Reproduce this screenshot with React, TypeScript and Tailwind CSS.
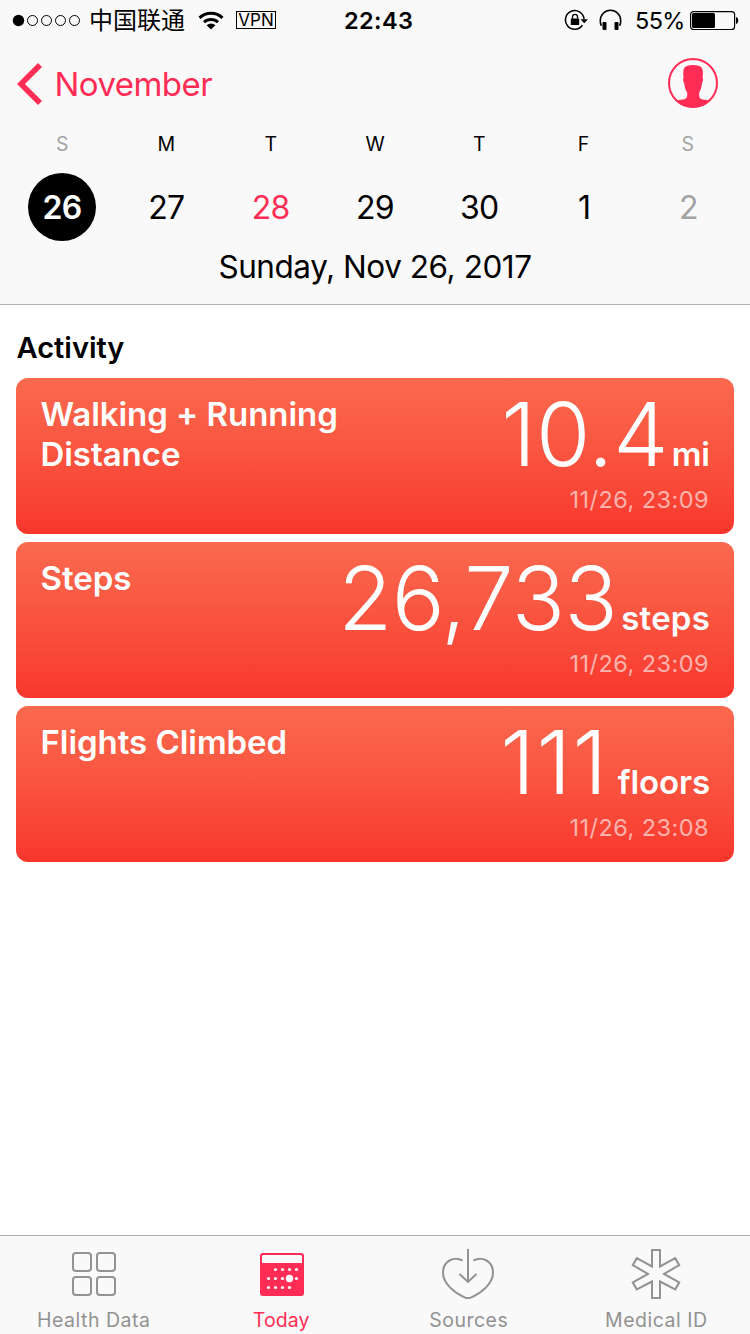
import React from 'react';
import clsx from 'clsx';

interface Day {
  letter: string;
  date: string;
  tone: 'selected' | 'normal' | 'today' | 'muted';
}

interface Metric {
  title: string;
  value: string;
  unit: string;
  time: string;
  valueClass: string;
  unitClass: string;
}

const days: Day[] = [
  { letter: 'S', date: '26', tone: 'selected' },
  { letter: 'M', date: '27', tone: 'normal' },
  { letter: 'T', date: '28', tone: 'today' },
  { letter: 'W', date: '29', tone: 'normal' },
  { letter: 'T', date: '30', tone: 'normal' },
  { letter: 'F', date: '1', tone: 'normal' },
  { letter: 'S', date: '2', tone: 'muted' },
];

const metrics: Metric[] = [
  {
    title: 'Walking + Running Distance',
    value: '10.4',
    unit: 'mi',
    time: '11/26, 23:09',
    valueClass: 'tracking-[0.1px]',
    unitClass: 'ml-[3px]',
  },
  {
    title: 'Steps',
    value: '26,733',
    unit: 'steps',
    time: '11/26, 23:09',
    valueClass: 'tracking-[-0.5px]',
    unitClass: 'ml-[4px] tracking-[0.2px]',
  },
  {
    title: 'Flights Climbed',
    value: '111',
    unit: 'floors',
    time: '11/26, 23:08',
    valueClass: 'tracking-[1.500px]',
    unitClass: 'ml-[9px] tracking-[-0.1px]',
  },
];

const StatusBar: React.FC = () => (
  <div className="flex h-[40px] items-center pr-[11px] pl-[12px] text-[23.5px] leading-[40px] text-black">
    <svg width="70" height="14" viewBox="0 0 70 14" className="shrink-0">
      <circle cx="6.5" cy="7.5" r="5.7" />
      {[20.5, 34.5, 48.5, 62.5].map((cx) => (
        <circle key={cx} cx={cx} cy="7.5" r="5" fill="none" stroke="black" />
      ))}
    </svg>
    <span className="ml-[7px] w-[98px] shrink-0 pt-[2px] text-[24px] leading-[38px] whitespace-nowrap">中国联通</span>
    <svg width="26" height="19" viewBox="0 0 26 19" className="ml-[11px] shrink-0">
      <g fill="none" stroke="black" strokeWidth="3">
        <path d="M1.5 6.8a16.5 16.5 0 0 1 23 0" />
        <path d="M6 11.2a10.2 10.2 0 0 1 14 0" />
      </g>
      <path d="M13 18.5l-4.4-4.2a6.6 6.6 0 0 1 8.8 0z" />
    </svg>
    <span className="ml-[12px] flex h-[18px] w-[40px] shrink-0 items-center justify-center border border-black pt-px text-[17px] leading-none">
      VPN
    </span>
    <span className="ml-[68px] w-[72px] shrink-0 pt-[2px] text-[23.5px] leading-[38px] font-semibold tracking-[0.4px]">22:43</span>
    <div className="ml-auto flex items-center">
      <svg width="25" height="22" viewBox="0 0 25 22">
        <path d="M18.4 16.2A9.3 9.3 0 1 1 20 10" fill="none" stroke="black" strokeWidth="1.5" />
        <path d="M16.5 10.3h7.5l-3.8 4z" />
        <rect x="6.8" y="9.5" width="8.4" height="6.5" rx="0.6" />
        <path d="M8.5 9.8V7.8a2.500 2.500 0 0 1 5 0v2" fill="none" stroke="black" strokeWidth="1.3" />
      </svg>
      <svg width="24" height="22" viewBox="0 0 24 22" className="ml-[10px]">
        <path d="M2.4 16.8C1.200 15 1.300 13 1.300 11.500a10.200 10.200 0 0 1 20.400 0c0 1.500.1 3.500-1.100 5.300" fill="none" stroke="black" strokeWidth="1.6" />
        <rect x="3.5" y="13" width="4" height="8" rx="1" />
        <rect x="15.5" y="13" width="4" height="8" rx="1" />
      </svg>
      <span className="ml-[12px] w-[55px] pt-[2px] leading-[38px] tracking-[-0.6px]">55%</span>
      <svg width="49" height="20" viewBox="0 0 49 20">
        <rect x="0.6" y="1.6" width="44" height="18" rx="3" fill="none" stroke="black" strokeWidth="1.2" />
        <rect x="2" y="3" width="23" height="15" rx="1.5" />
        <path d="M46 7c3 .5 3 6.500 0 7z" />
      </svg>
    </div>
  </div>
);

const ProfileIcon: React.FC = () => (
  <svg width="50" height="50" viewBox="0 0 50 50" className="mb-[2px]">
    <circle cx="25" cy="25" r="24" fill="none" stroke="#ff2d55" strokeWidth="2" />
    <path
      fill="#ff2d55"
      d="M25 7C29.500 7 32.500 8 33.800 9.800C35.400 12 35 16 34.600 20.300C35.500 20.500 35.200 23.500 34 25C33.600 29.500 32.700 32 31.200 34.500V37.500C31.200 40 32 40.700 34 41.200C36.500 41.900 39 41.600 41.500 42.800C37.500 47.500 31.500 49.500 25 49.500S12.500 47.500 8.500 42.800C11 41.600 13.500 41.900 16 41.200C18 40.700 19.200 40 19.200 37.500V34.500C17.500 32 16.600 29.500 16.200 25C15 23.500 14.700 20.500 15.600 20.300C15.200 16 14.800 12 16.400 9.800C17.800 8 20.500 7 25 7Z"
    />
  </svg>
);

const HealthDataIcon: React.FC = () => (
  <svg width="52" height="52" viewBox="0 0 52 52" fill="none" stroke="currentColor" strokeWidth="2">
    <rect x="5" y="5" width="18" height="18" rx="3" />
    <rect x="29" y="5" width="18" height="18" rx="3" />
    <rect x="5" y="29" width="18" height="18" rx="3" />
    <rect x="29" y="29" width="18" height="18" rx="3" />
  </svg>
);

const TodayIcon: React.FC = () => (
  <svg width="54" height="52" viewBox="0 0 54 52">
    <g transform="translate(2 0)">
      <rect x="4" y="5" width="44" height="43" rx="3" fill="currentColor" />
      <path d="M6 8.5Q6 7 7.500 7h37Q46 7 46 8.500V15H6z" fill="#fafafa" />
      <g fill="white">
        {[19.5, 26.5, 33.5, 40.5].map((x) => <circle key={x} cx={x} cy="21.5" r="1.6" />)}
        {[12.5, 19.5, 26.5, 40.5].map((x) => <circle key={x} cx={x} cy="30.5" r="1.6" />)}
        {[12.5, 19.5, 26.5, 33.5].map((x) => <circle key={x} cx={x} cy="39.5" r="1.6" />)}
        <circle cx="33.5" cy="30.5" r="3.7" />
      </g>
    </g>
  </svg>
);

const SourcesIcon: React.FC = () => (
  <svg width="56" height="52" viewBox="0 0 56 52" fill="none" stroke="currentColor" strokeWidth="2">
    <path d="M21.7 12.7C14 8.3 2 12 2 24.5C2 36 14 45 23.5 49.3Q27 50.8 30.5 49.3C40 45 52 36 52 24.5C52 12 40 8.3 32.3 12.7" />
    <path d="M27 1v33M18.5 26l8.5 8 8.5-8" />
  </svg>
);

const MedicalIcon: React.FC = () => (
  <svg width="52" height="52" viewBox="0 0 52 52" fill="none" stroke="currentColor" strokeWidth="2">
    <path d="M22 2h8v16.5l15.2-8.3 4 7L34 26l15.2 8.3-4 7L30 33.5V50h-8V33.5L6.8 41.3l-4-7L18 26 2.8 17.2l4-7L22 18.5z" />
  </svg>
);

const tabs = [
  { label: 'Health Data', Icon: HealthDataIcon },
  { label: 'Today', Icon: TodayIcon },
  { label: 'Sources', Icon: SourcesIcon },
  { label: 'Medical ID', Icon: MedicalIcon },
];

const MetricCard: React.FC<{ metric: Metric }> = ({ metric }) => (
  <div className="flex h-[156px] justify-between rounded-[12px] bg-linear-to-b from-[#fa694e] to-[#f8362d] pr-[24px] pl-[24.5px] text-white">
    <h3 className="w-[310px] pt-[16px] text-[33px] leading-[40px] font-semibold tracking-[-0.05px]">{metric.title}</h3>
    <div className="flex flex-col items-end whitespace-nowrap">
      <div className="flex h-[108px] items-baseline pt-[2px] leading-[108px]">
        <span className={clsx('text-[88px] font-light', metric.valueClass)}>{metric.value}</span>
        <span className={clsx('text-[33px] font-semibold', metric.unitClass)}>{metric.unit}</span>
      </div>
      <span className="pr-[1px] text-[23.5px] leading-[28px] tracking-[0.45px] text-white/60">{metric.time}</span>
    </div>
  </div>
);

const App: React.FC = () => {
  return (
    <div className="flex h-[1334px] w-[750px] flex-col overflow-hidden bg-white font-['Inter','Noto_Sans_CJK_SC',sans-serif] text-black">
      <header className="h-[305px] shrink-0 border-b border-[#b2b2b2] bg-[#f9f9f9]">
        <StatusBar />
        <div className="flex h-[88px] items-center justify-between pr-[32px] pl-[16px]">
          <button className="flex items-center text-[33px] leading-[40px] text-[#ff2d55]">
            <svg width="28" height="44" viewBox="0 0 28 44" fill="none" stroke="currentColor" strokeWidth="5.6">
              <path d="M24 3L5 22l19 19" />
            </svg>
            <span className="ml-[10.5px] tracking-[-0.55px]">November</span>
          </button>
          <ProfileIcon />
        </div>
        <div className="grid grid-cols-7 px-[10px]">
          {days.map((day, i) => (
            <div key={i} className="flex flex-col items-center">
              <span
                className={clsx(
                  'h-[45px] text-[19.5px] leading-[32px]',
                  day.letter === 'S' && 'text-[#a3a3a3]'
                )}
              >
                {day.letter}
              </span>
              <span
                className={clsx(
                  'flex size-[68px] items-center justify-center rounded-full pt-[2px] text-[32px]',
                  day.date.length === 1 ? 'pl-[2px]' : 'tracking-[-0.6px]',
                  day.tone === 'selected' && 'bg-black font-semibold text-white',
                  day.tone === 'today' && 'text-[#ff2d55]',
                  day.tone === 'muted' && 'text-[#a3a3a3]'
                )}
              >
                {day.date}
              </span>
            </div>
          ))}
        </div>
        <p className="mt-[6px] text-center text-[31.5px] leading-[40px] tracking-[-0.45px]">Sunday, Nov 26, 2017</p>
      </header>

      <main className="flex-1 px-[16px] pt-[23px]">
        <h2 className="h-[50px] pl-[0.5px] text-[29px] leading-[40px] font-semibold">Activity</h2>
        <div className="flex flex-col gap-2">
          {metrics.map((metric) => (
            <MetricCard key={metric.title} metric={metric} />
          ))}
        </div>
      </main>

      <nav className="grid h-[99px] shrink-0 grid-cols-4 border-t border-[#b2b2b2] bg-[#f9f9f9]">
        {tabs.map(({ label, Icon }) => (
          <button
            key={label}
            className={clsx(
              'flex flex-col items-center pt-[12px]',
              label === 'Today' ? 'text-[#ff2d55]' : 'text-[#929292]'
            )}
          >
            <Icon />
            <span
              className={clsx(
                'mt-[8px] text-[19.5px] leading-[24px]',
                label === 'Today' ? 'tracking-[0.1px]' : 'tracking-[0.5px]'
              )}
            >
              {label}
            </span>
          </button>
        ))}
      </nav>
    </div>
  );
};

export default App;
